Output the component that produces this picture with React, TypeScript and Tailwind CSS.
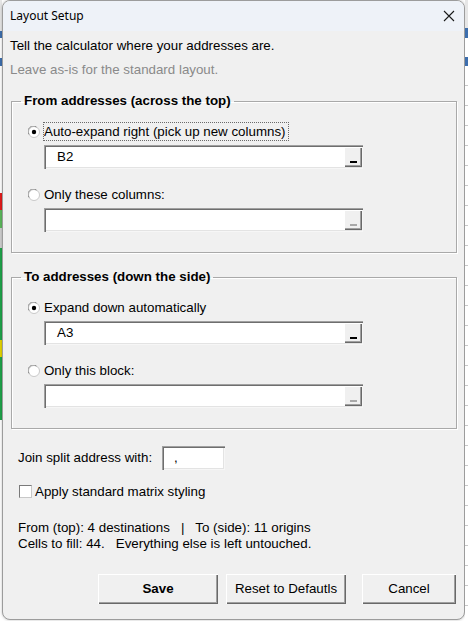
import React from "react";

function Radio({ checked }: { checked: boolean }) {
  return (
    <svg width="12" height="12" viewBox="0 0 12 12" className="shrink-0">
      <circle cx="6" cy="6" r="5.5" fill="#ffffff" stroke="#c8c8c8" />
      <path d="M1.2 8.5 A5.2 5.2 0 0 1 8.5 1.2" fill="none" stroke="#8a8a8a" strokeWidth="1" />
      {checked && <circle cx="6" cy="6" r="2.2" fill="#000000" />}
    </svg>
  );
}

function RefBox({ value, enabled }: { value: string; enabled: boolean }) {
  return (
    <div className="ml-[32px] mt-[4px] flex h-[24px] w-[319px] items-stretch bg-white shadow-[inset_1px_1px_0_#a0a0a0,inset_2px_2px_0_#6e6e6e,inset_-1px_-1px_0_#f6f6f6,inset_-2px_-2px_0_#e3e3e3]">
      <div className="flex flex-1 items-center pl-[13px] text-[13.33px] text-black">{value}</div>
      <div className="my-[2px] mr-[1px] flex w-[18px] items-end justify-center bg-[#f0f0f0] pb-[4px] shadow-[inset_1px_1px_0_#ffffff,inset_-1px_-1px_0_#696969,inset_-2px_-2px_0_#a0a0a0]">
        <div className={enabled ? "h-[2px] w-[7px] bg-black" : "h-[2px] w-[7px] bg-[#a8a8a8]"} />
      </div>
    </div>
  );
}

function Frame({
  title,
  first,
  firstValue,
  second,
  focused,
}: {
  title: string;
  first: string;
  firstValue: string;
  second: string;
  focused: boolean;
}) {
  return (
    <fieldset className="ml-[8px] w-[446px] border border-[#a9a9a9] px-0 pb-[20px] pt-0 shadow-[1px_1px_0_#ffffff,inset_1px_1px_0_#ffffff]">
      <legend className="ml-[9px] px-[3px] text-[13.33px] font-bold leading-[16px] text-black">{title}</legend>
      <div className="mt-[13px] ml-[16px] flex h-[19px] items-center">
        <Radio checked />
        {focused ? (
          <span className="ml-[3px] flex h-[19px] items-center border border-dotted border-[#6b6b6b] pr-[2px] text-[13.33px] text-black">
            {first}
          </span>
        ) : (
          <span className="ml-[4px] text-[13.33px] text-black">{first}</span>
        )}
      </div>
      <RefBox value={firstValue} enabled />
      <div className="mt-[16px] ml-[16px] flex h-[19px] items-center">
        <Radio checked={false} />
        <span className="ml-[4px] text-[13.33px] text-black">{second}</span>
      </div>
      <RefBox value="" enabled={false} />
    </fieldset>
  );
}

function Btn({ label, w, bold }: { label: string; w: string; bold?: boolean }) {
  return (
    <div
      className={
        "flex h-[30px] items-center justify-center bg-[#f0f0f0] text-[13.33px] text-black shadow-[inset_1px_1px_0_#ffffff,inset_-1px_-1px_0_#696969,inset_-2px_-2px_0_#a0a0a0] " +
        w +
        (bold ? " font-bold" : "")
      }
    >
      {label}
    </div>
  );
}

export default function App() {
  return (
    <div className="flex h-[621px] w-[468px] overflow-hidden bg-white font-['Liberation_Sans',Arial,sans-serif]">
      <div className="flex w-[2px] flex-col">
        <div className="h-[31px] bg-[#e6e6e6]" />
        <div className="h-[7px] bg-[#3d6ead]" />
        <div className="h-[20px] bg-white" />
        <div className="h-[8px] bg-[#3d6ead]" />
        <div className="h-[127px] bg-white" />
        <div className="h-[17px] bg-[#e31b1b]" />
        <div className="h-[18px] bg-[#5cb85c]" />
        <div className="h-[20px] bg-[#cfcfcf]" />
        <div className="h-[92px] bg-[#1fa34a]" />
        <div className="h-[17px] bg-[#e4d400]" />
        <div className="h-[63px] bg-[#1fa34a]" />
        <div className="flex-1 bg-white" />
      </div>
      <div className="flex h-[620px] w-[463px] flex-col overflow-hidden rounded-b-[8px] rounded-t-[8px] border border-[#9c9c9c] bg-[#f0f0f0] shadow-[0_0_3px_rgba(0,0,0,0.25)]">
        <div className="flex h-[30px] shrink-0 items-center justify-between bg-[#eef2f8] pl-[7px] pr-[8px]">
          <span className="font-['Noto_Sans',sans-serif] text-[12px] text-black">Layout Setup</span>
          <svg width="12" height="12" viewBox="0 0 12 12" className="mr-[1px]">
            <path d="M1 1 L11 11 M11 1 L1 11" stroke="#1a1a1a" strokeWidth="1.1" />
          </svg>
        </div>
        <div className="flex flex-col">
          <div className="mt-[7px] pl-[7px] text-[13.33px] leading-[16px] text-black">
            Tell the calculator where your addresses are.
          </div>
          <div className="mt-[8px] pl-[7px] text-[13.33px] leading-[16px] text-[#8a8a8a]">
            Leave as-is for the standard layout.
          </div>
          <div className="mt-[15px]">
            <Frame
              title="From addresses (across the top)"
              first="Auto-expand right (pick up new columns)"
              firstValue="B2"
              second="Only these columns:"
              focused
            />
          </div>
          <div className="mt-[16px]">
            <Frame
              title="To addresses (down the side)"
              first="Expand down automatically"
              firstValue="A3"
              second="Only this block:"
              focused={false}
            />
          </div>
          <div className="mt-[17px] ml-[15px] flex items-center">
            <span className="w-[144px] text-[13.33px] leading-[16px] text-black">Join split address with:</span>
            <div className="flex h-[24px] w-[63px] items-center bg-white pl-[12px] text-[13.33px] text-black shadow-[inset_1px_1px_0_#a0a0a0,inset_2px_2px_0_#6e6e6e,inset_-1px_-1px_0_#f6f6f6,inset_-2px_-2px_0_#e3e3e3]">
              ,
            </div>
          </div>
          <div className="mt-[15px] ml-[16px] flex h-[13px] items-center">
            <div className="h-[13px] w-[13px] border border-[#7a7a7a] border-r-[#c8c8c8] border-b-[#c8c8c8] bg-white" />
            <span className="ml-[3px] text-[13.33px] leading-[16px] text-black">Apply standard matrix styling</span>
          </div>
          <div className="mt-[22px] ml-[15px] whitespace-pre text-[13.33px] leading-[16px] text-black">
            {"From (top): 4 destinations   |   To (side): 11 origins"}
          </div>
          <div className="ml-[15px] whitespace-pre text-[13.33px] leading-[16px] text-black">
            {"Cells to fill: 44.   Everything else is left untouched."}
          </div>
          <div className="mt-[22px] ml-[95px] flex">
            <Btn label="Save" w="w-[120px]" bold />
            <div className="ml-[8px]">
              <Btn label="Reset to Defautls" w="w-[120px]" />
            </div>
            <div className="ml-[16px]">
              <Btn label="Cancel" w="w-[94px]" />
            </div>
          </div>
        </div>
      </div>
      <div className="flex w-[3px] flex-col">
        <div className="h-[28px] bg-[#e6e6e6]" />
        <div className="h-[10px] bg-[#3d6ead]" />
        <div className="h-[19px] bg-white" />
        <div className="h-[9px] bg-[#3d6ead]" />
        <div className="flex-1 bg-[repeating-linear-gradient(to_bottom,#ffffff_0px,#ffffff_19px,#c8c8c8_19px,#c8c8c8_20px)]" />
      </div>
    </div>
  );
}
